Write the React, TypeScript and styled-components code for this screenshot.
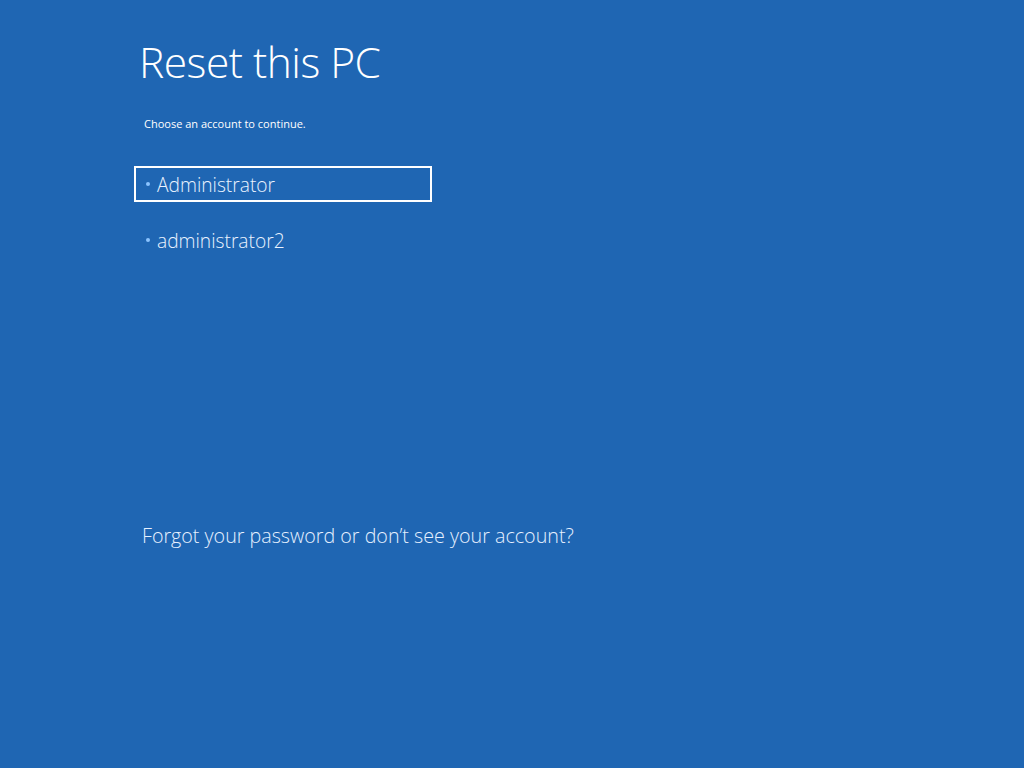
import styled, { createGlobalStyle } from 'styled-components';

const GlobalStyle = createGlobalStyle`
  html, body {
    margin: 0;
    padding: 0;
    background: #1f66b3;
  }
  body {
    font-family: 'Open Sans', 'Noto Sans', sans-serif;
    color: #ffffff;
  }
`;

const Screen = styled.div`
  width: 1024px;
  height: 768px;
  box-sizing: border-box;
  background: #1f66b3;
  padding: 32px 0 0 134px;
  display: flex;
  flex-direction: column;
`;

const Title = styled.h1`
  margin: 0 0 0 5px;
  font-size: 42.5px;
  font-weight: 300;
  line-height: 60px;
  letter-spacing: -0.5px;
`;

const Subtitle = styled.p`
  margin: 24px 0 0 10px;
  font-size: 11px;
  line-height: 16px;
  font-weight: 400;
`;

const Accounts = styled.ul`
  list-style: none;
  margin: 34px 0 0;
  padding: 0;
  display: flex;
  flex-direction: column;
  gap: 20px;
`;

const Account = styled.li<{ selected?: boolean }>`
  width: 298px;
  height: 36px;
  box-sizing: border-box;
  border: 2px solid ${({ selected }) => (selected ? '#ffffff' : 'transparent')};
  display: flex;
  align-items: center;
  gap: 7px;
  padding-left: 10px;
  font-size: 19.2px;
  font-weight: 300;
  color: #eaf3ff;
`;

const Dot = styled.span`
  width: 4px;
  height: 4px;
  border-radius: 50%;
  background: #8cc4ff;
  flex: none;
`;

const Link = styled.a`
  margin: 265px 0 0 8px;
  font-size: 19.7px;
  font-weight: 300;
  line-height: 26px;
  color: #e6f0ff;
  text-decoration: none;
  cursor: pointer;
`;

export default function App() {
  return (
    <>
      <GlobalStyle />
      <Screen>
        <Title>Reset this PC</Title>
        <Subtitle>Choose an account to continue.</Subtitle>
        <Accounts>
          <Account selected>
            <Dot />
            Administrator
          </Account>
          <Account>
            <Dot />
            administrator2
          </Account>
        </Accounts>
        <Link>Forgot your password or don’t see your account?</Link>
      </Screen>
    </>
  );
}
